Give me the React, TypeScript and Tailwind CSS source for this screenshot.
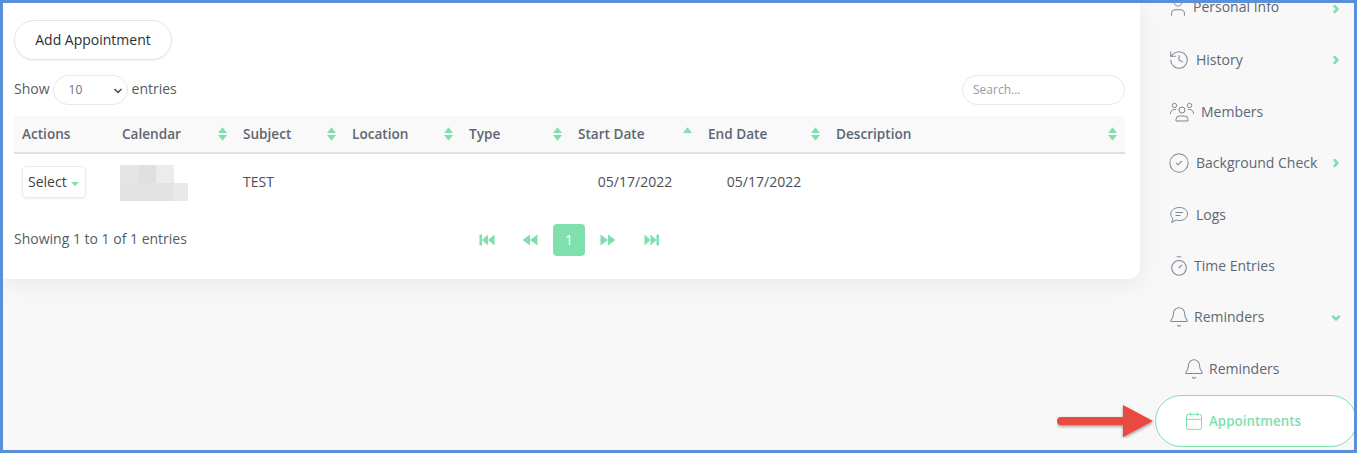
import type { ReactNode } from 'react'
import { User, History, CircleCheck, Timer, Bell, Calendar, ChevronRight, ChevronDown } from 'lucide-react'

const font = 'font-["Open_Sans",sans-serif]'

function SortIcon({ up = true, down = true }: { up?: boolean; down?: boolean }) {
  return (
    <svg width="9" height="14" viewBox="0 0 9 14" className="shrink-0">
      {up && <path d="M4.5 0.3 L9 6 H0 Z" fill="#7fe0ae" />}
      {down && <path d="M0 8 H9 L4.5 13.7 Z" fill="#7fe0ae" />}
    </svg>
  )
}

const columns = [
  { label: 'Actions', w: 'w-[100px]', sort: false },
  { label: 'Calendar', w: 'w-[121px]', sort: true },
  { label: 'Subject', w: 'w-[109px]', sort: true },
  { label: 'Location', w: 'w-[117px]', sort: true },
  { label: 'Type', w: 'w-[109px]', sort: true },
  { label: 'Start Date', w: 'w-[130px]', sort: true, asc: true },
  { label: 'End Date', w: 'w-[128px]', sort: true },
  { label: 'Description', w: 'w-[297px]', sort: true },
]

function BlurredName() {
  const cells = ['bg-[#e6e6e6]', 'bg-[#e0e0e0]', 'bg-[#ececec]', 'bg-white', 'bg-[#e3e3e3]', 'bg-[#e3e3e3]', 'bg-[#e3e3e3]', 'bg-[#e9e9eb]']
  return (
    <div className="grid grid-cols-[18px_18px_18px_14px] grid-rows-[18px_18px] mt-[2px]">
      {cells.map((c, i) => (
        <div key={i} className={c} />
      ))}
    </div>
  )
}

function PageIcon({ d }: { d: string }) {
  return (
    <svg width="16" height="12" viewBox="0 0 16 12" fill="#7fe0ae">
      <path d={d} />
    </svg>
  )
}

function Pagination() {
  return (
    <div className="flex items-center">
      <PageIcon d="M0.5 0.5 H3 V11.5 H0.5 Z M3 6 L9 0.5 V11.5 Z M9 6 L15.5 0.5 V11.5 Z" />
      <div className="w-[27px]" />
      <PageIcon d="M0.5 6 L8 0.5 V11.5 Z M8 6 L15.5 0.5 V11.5 Z" />
      <div className="w-[15px]" />
      <div className="w-[32px] h-[32px] rounded bg-[#7fe0ae] text-white text-sm flex items-center justify-center">1</div>
      <div className="w-[15px]" />
      <PageIcon d="M0.5 0.5 L8 6 L0.5 11.5 Z M8 0.5 L15.5 6 L8 11.5 Z" />
      <div className="w-[28px]" />
      <PageIcon d="M0.5 0.5 L6.5 6 L0.5 11.5 Z M6.5 0.5 L12.5 6 L6.5 11.5 Z M12.5 0.5 H15 V11.5 H12.5 Z" />
    </div>
  )
}

function MembersIcon() {
  return (
    <svg width="24" height="20" viewBox="0 0 24 20" fill="none" stroke="#7d8794" strokeWidth="1">
      <circle cx="12" cy="8" r="3" />
      <path d="M6 19 v-1.5 a3.5 3.5 0 0 1 3.5 -3.5 h5 a3.5 3.5 0 0 1 3.5 3.5 V19 Z" />
      <circle cx="4.5" cy="3.5" r="2.2" />
      <circle cx="19.5" cy="3.5" r="2.2" />
      <path d="M0.5 12 a4 4 0 0 1 4 -4.5 h1.5 M23.5 12 a4 4 0 0 0 -4 -4.5 h-1.5" />
    </svg>
  )
}

function LogsIcon() {
  return (
    <svg width="18" height="18" viewBox="0 0 18 18" fill="none" stroke="#7d8794" strokeWidth="1">
      <path d="M9.5 1.5 C14 1.5 17.5 4 17.5 8 C17.5 12 14 14.5 9.5 14.5 C8 14.5 7 14.3 6 14 L1.5 16.5 L3 12.5 C1.5 11.5 0.8 9.8 0.8 8 C0.8 4 5 1.5 9.5 1.5 Z" />
      <path d="M5.5 6.5 H13 M5.5 9.5 H10.5" />
    </svg>
  )
}

const iconProps = { color: '#7d8794', strokeWidth: 1.1 }

function SideItem({ icon, label, gap, pl = 'pl-[30px]', chevron, nudge = '' }: { icon: ReactNode; label: string; gap: string; pl?: string; chevron?: 'right' | 'down'; nudge?: string }) {
  return (
    <div className={`h-[51.5px] flex items-center text-sm text-[#5f6773] ${pl}`}>
      <span className={`flex items-center ${gap} ${nudge}`}>
        {icon}
        <span>{label}</span>
      </span>
      {chevron === 'right' && <ChevronRight size={12} color="#7fe0ae" strokeWidth={5} className="absolute left-[190px]" />}
      {chevron === 'down' && <ChevronDown size={12} color="#7fe0ae" strokeWidth={5} className="absolute left-[190px]" />}
    </div>
  )
}

export default function App() {
  return (
    <div className={`${font} relative w-[1357px] h-[453px] border-[3px] border-[#5a90d8] bg-[#f8f8f8] overflow-hidden flex`}>
      <div className="w-[1137px] h-[276px] bg-white rounded-br-xl shadow-[0_4px_24px_rgba(0,0,0,0.07)] pl-[11px] pr-[15px] pt-[17px] shrink-0">
        <button className="h-[40px] w-[158px] rounded-full bg-white border border-[#e6e6e6] shadow-[0_1px_2px_rgba(0,0,0,0.06)] text-sm text-[#2b2f36]">
          Add Appointment
        </button>
        <div className="flex items-center justify-between mt-[15px] h-[30px] text-sm text-[#555c66]">
          <div className="flex items-center">
            <span className="-mt-[2px]">Show</span>
            <div className="relative w-[75px] h-[30px] ml-[3px] mr-[4px] rounded-full border border-[#e8e8e8] flex items-center pl-[15px] text-xs text-[#6b7280]">
              10
              <ChevronDown size={12} strokeWidth={3.5} color="#555" className="absolute right-[3px] top-[9px]" />
            </div>
            <span className="-mt-[2px]">entries</span>
          </div>
          <div className="w-[163px] h-[30px] rounded-full border border-[#e8e8e8] flex items-center pl-[10px] text-xs text-[#9a9a9a]">Search...</div>
        </div>
        <div className="flex mt-[11px] h-[38px] bg-[#f9f9f9] border-b-2 border-[#e0e0e0] text-[13.6px] font-semibold text-[#5e6673]">
          {columns.map((c) => (
            <div key={c.label} className={`${c.w} flex items-center justify-between pl-2 pr-2`}>
              <span>{c.label}</span>
              {c.sort && <SortIcon down={!c.asc} />}
            </div>
          ))}
        </div>
        <div className="flex items-center h-[56px] text-sm">
          <div className="w-[100px] pl-2">
            <div className="w-[64px] h-[32px] rounded border border-[#ececec] shadow-[0_1px_2px_rgba(0,0,0,0.08)] flex items-center pl-[5px] text-[#3a3f47]">
              Select
              <svg width="8" height="4" viewBox="0 0 8 4" className="ml-[4px] mt-[3px]"><path d="M0 0 H8 L4 4 Z" fill="#7fe0ae" /></svg>
            </div>
          </div>
          <div className="w-[121px] pl-[6px]"><BlurredName /></div>
          <div className="w-[109px] pl-2 text-[#4a4f57]">TEST</div>
          <div className="w-[117px]" />
          <div className="w-[109px]" />
          <div className="w-[130px] text-center text-[#4a4f57]">05/17/2022</div>
          <div className="w-[128px] text-center text-[#4a4f57]">05/17/2022</div>
        </div>
        <div className="flex items-center h-[32px] mt-[14px] text-sm text-[#555c66]">
          <span className="w-[465px] -mt-[2px]">Showing 1 to 1 of 1 entries</span>
          <Pagination />
        </div>
      </div>
      <div className="relative flex-1 -mt-[20px]">
        <SideItem icon={<User size={22} {...iconProps} />} label="Personal Info" gap="gap-[4px]" pl="pl-[27px]" chevron="right" nudge="-mt-[3px]" />
        <SideItem icon={<History size={22} {...iconProps} />} label="History" gap="gap-[6px]" pl="pl-[28px]" chevron="right" />
        <SideItem icon={<MembersIcon />} label="Members" gap="gap-[7px]" />
        <SideItem icon={<CircleCheck size={22} {...iconProps} />} label="Background Check" gap="gap-[6px]" pl="pl-[28px]" chevron="right" />
        <SideItem icon={<LogsIcon />} label="Logs" gap="gap-[8px]" />
        <SideItem icon={<Timer size={22} {...iconProps} />} label="Time Entries" gap="gap-[4px]" pl="pl-[28px]" />
        <SideItem icon={<Bell size={22} {...iconProps} />} label="Reminders" gap="gap-[4px]" pl="pl-[28px]" chevron="down" nudge="-mt-[2px]" />
        <SideItem icon={<Bell size={22} {...iconProps} />} label="Reminders" gap="gap-[4px]" pl="pl-[43px]" />
        <div className="h-[52px] ml-[15px] -mr-[3px] rounded-full border border-[#7fe0ae] bg-white flex items-center pl-[28px] gap-[5px] text-[13.4px] font-semibold text-[#7fe0ae]">
          <Calendar size={20} color="#7fe0ae" strokeWidth={1.2} />
          <span>Appointments</span>
        </div>
      </div>
      <svg width="98" height="34" viewBox="0 0 98 34" className="absolute left-[1054px] top-[401px]">
        <defs>
          <filter id="arrow-shadow" x="-10%" y="-30%" width="120%" height="160%">
            <feDropShadow dx="0" dy="1.5" stdDeviation="1.5" floodColor="#000" floodOpacity="0.4" />
          </filter>
        </defs>
        <path d="M4 13 H66 V1 L96 17 L66 33 V21 H4 A4 4 0 0 1 4 13 Z" fill="#e9483f" filter="url(#arrow-shadow)" />
      </svg>
    </div>
  )
}
